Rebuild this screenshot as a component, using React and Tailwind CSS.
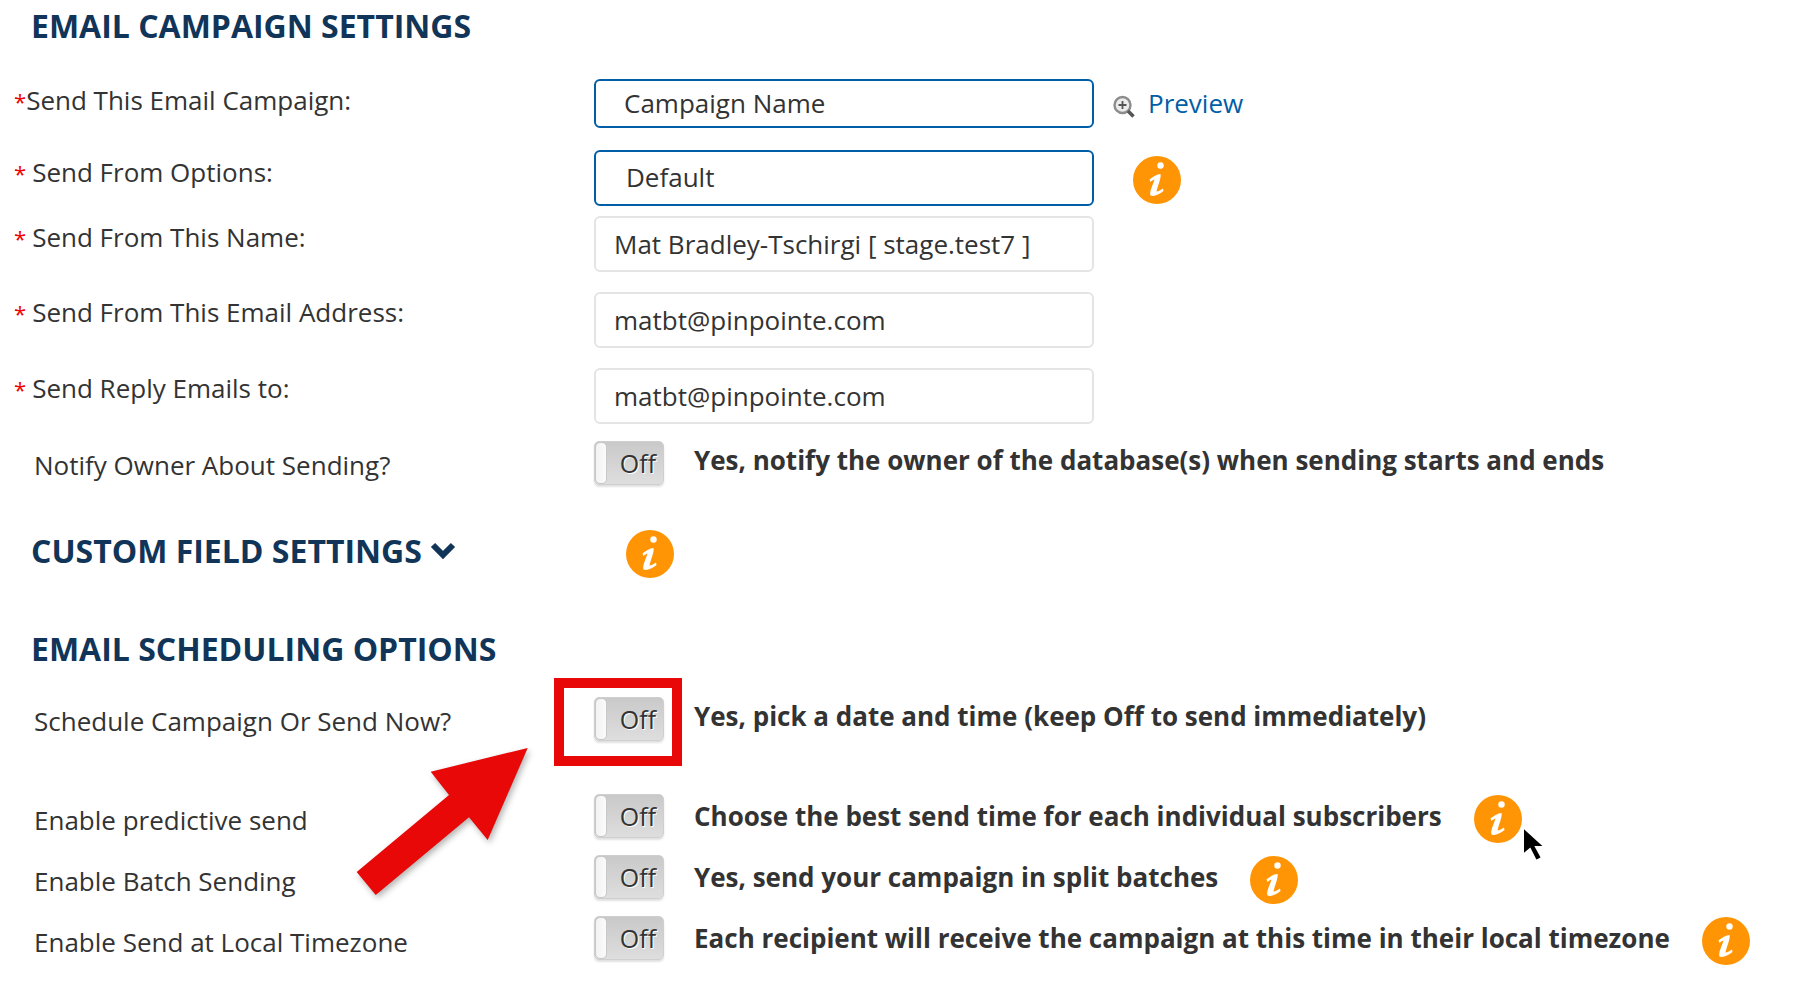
import React from 'react'

const InfoIcon = () => (
    <svg width="48" height="48" viewBox="0 0 48 48" className="shrink-0">
        <circle cx="24" cy="24" r="24" fill="#ff9505" />
        <circle cx="27.5" cy="9.5" r="3.2" fill="#fff" />
        <path d="M16.5 23.5 C20 20.5 24 18 27.5 18 C28.5 22 24.5 30 23.5 35.5 C25.5 35.5 28 34 30 32.5 L30.5 35 C26 38.5 21 41 17.5 39.5 C16 35.5 20.5 28 21.5 23.5 C20 24 18.5 25 17.5 26 Z" fill="#fff" />
    </svg>
)

const Toggle = () => (
    <div className="relative w-[70px] h-[44px] shrink-0 rounded-[5px] border border-[#cfcfcf] bg-linear-to-b from-[#c9c9c9] to-[#dedede] shadow-[0_2px_2px_rgba(0,0,0,0.12)]">
        <div className="absolute left-0 top-0 h-full w-[12px] rounded-[5px] border border-[#c8c8c8] bg-linear-to-r from-[#f2f2f2] to-[#fbfbfb]"></div>
        <div className="absolute right-[7px] top-[1px] h-full flex items-center text-[25px] text-[#333] [text-shadow:1px_1px_0_#fff]">Off</div>
    </div>
)

const Field = ({ value, active, height, pad }) => (
    <input
        readOnly
        value={value}
        style={{ height, paddingLeft: pad }}
        className={active
            ? 'w-[500px] rounded-[6px] border-2 border-[#005ea6] bg-white pb-[2px] text-[26px] text-[#333] outline-none'
            : 'w-[500px] rounded-[6px] border-2 border-[#e4e4e4] bg-white text-[26px] text-[#333] outline-none'}
    />
)

const Heading = ({ children }) => (
    <h2 className="pl-[31px] text-[32px] leading-[44px] font-bold text-[#113558]">{children}</h2>
)

const Req = ({ children }) => (
    <div className="pl-[14px] text-[26px] leading-[36px] text-[#333]">
        <span className="text-[22px] text-[#f00000]">*</span>
        <span className="ml-[6px]">{children}</span>
    </div>
)

const Plain = ({ children }) => (
    <div className="pl-[34px] text-[26px] leading-[36px] text-[#333]">{children}</div>
)

const Note = ({ children }) => (
    <div className="ml-[30px] text-[26px] leading-[36px] font-bold text-[#333] whitespace-nowrap">{children}</div>
)

export default function App() {
    return (
        <div className="relative w-[1814px] h-[998px] overflow-hidden bg-white font-['Open_Sans',sans-serif]">
            <div className="pt-[4px]">
                <Heading>EMAIL CAMPAIGN SETTINGS</Heading>
            </div>

            <div className="mt-[31px] flex h-[49px]">
                <div className="w-[594px] pt-[3px] pl-[14px] text-[26px] leading-[36px] text-[#333]">
                    <span className="text-[22px] text-[#f00000]">*</span>Send This Email Campaign:
                </div>
                <Field value="Campaign Name" active height={49} pad={28} />
                <div className="ml-[19px] flex items-center gap-[13px]">
                    <svg width="22" height="24" viewBox="0 0 22 24" fill="none" className="mt-[6px]">
                        <circle cx="9.5" cy="10" r="8" stroke="#8c8c8c" strokeWidth="2.4" fill="#ececec" />
                        <path d="M9.5 6v8M5.5 10h8" stroke="#555" strokeWidth="1.8" />
                        <path d="M15 16l5.5 5.5" stroke="#555" strokeWidth="3.5" />
                    </svg>
                    <span className="text-[26px] text-[#005ea6]">Preview</span>
                </div>
            </div>

            <div className="mt-[22px] flex h-[56px]">
                <div className="w-[594px] pt-[4px]"><Req>Send From Options:</Req></div>
                <Field value="Default" active height={56} pad={30} />
                <div className="ml-[39px] pt-[6px]"><InfoIcon /></div>
            </div>

            <div className="mt-[10px] flex h-[56px]">
                <div className="w-[594px] pt-[3px]"><Req>Send From This Name:</Req></div>
                <Field value="Mat Bradley-Tschirgi [ stage.test7 ]" height={56} pad={18} />
            </div>

            <div className="mt-[20px] flex h-[56px]">
                <div className="w-[594px] pt-[2px]"><Req>Send From This Email Address:</Req></div>
                <Field value="matbt@pinpointe.com" height={56} pad={18} />
            </div>

            <div className="mt-[20px] flex h-[56px]">
                <div className="w-[594px] pt-[2px]"><Req>Send Reply Emails to:</Req></div>
                <Field value="matbt@pinpointe.com" height={56} pad={18} />
            </div>

            <div className="mt-[17px] flex h-[44px]">
                <div className="w-[594px] pt-[6px]"><Plain>Notify Owner About Sending?</Plain></div>
                <Toggle />
                <div className="pt-[1px]"><Note>Yes, notify the owner of the database(s) when sending starts and ends</Note></div>
            </div>

            <div className="mt-[44px] flex h-[48px] items-center">
                <div className="w-[626px] flex items-center pb-[4px]">
                    <Heading>CUSTOM FIELD SETTINGS</Heading>
                    <svg width="26" height="18" viewBox="0 0 26 18" className="ml-[8px] mb-[3px]" fill="none">
                        <path d="M3 4l10 10L23 4" stroke="#113558" strokeWidth="6" />
                    </svg>
                </div>
                <div className="pt-[2px]"><InfoIcon /></div>
            </div>

            <div className="mt-[50px]">
                <Heading>EMAIL SCHEDULING OPTIONS</Heading>
            </div>

            <div className="mt-[26px] flex h-[44px]">
                <div className="w-[594px] pt-[6px]"><Plain>Schedule Campaign Or Send Now?</Plain></div>
                <Toggle />
                <div className="pt-[1px]"><Note>Yes, pick a date and time (keep Off to send immediately)</Note></div>
            </div>

            <div className="mt-[53px] flex h-[44px]">
                <div className="w-[594px] pt-[8px]"><Plain>Enable predictive send</Plain></div>
                <Toggle />
                <div className="pt-[4px]"><Note>Choose the best send time for each individual subscribers</Note></div>
                <div className="ml-[32px] pt-[1px] shrink-0"><InfoIcon /></div>
            </div>

            <div className="mt-[17px] flex h-[44px]">
                <div className="w-[594px] pt-[8px]"><Plain>Enable Batch Sending</Plain></div>
                <Toggle />
                <div className="pt-[4px]"><Note>Yes, send your campaign in split batches</Note></div>
                <div className="ml-[32px] pt-[1px] shrink-0"><InfoIcon /></div>
            </div>

            <div className="mt-[17px] flex h-[44px]">
                <div className="w-[594px] pt-[8px]"><Plain>Enable Send at Local Timezone</Plain></div>
                <Toggle />
                <div className="pt-[4px]"><Note>Each recipient will receive the campaign at this time in their local timezone</Note></div>
                <div className="ml-[32px] pt-[1px] shrink-0"><InfoIcon /></div>
            </div>

            {/* annotation drawn over the page */}
            <div className="absolute left-[554px] top-[678px] w-[128px] h-[88px] border-[10px] border-[#e90808]"></div>
            <svg className="absolute left-[340px] top-[730px] drop-shadow-[2px_3px_3px_rgba(0,0,0,0.3)]" width="200" height="180" viewBox="340 730 200 180">
                <path d="M527.7 748 L430.7 771.7 L449 795 L356.7 872 L375.7 895 L469 817.3 L487.7 840 Z" fill="#e90808" />
            </svg>
            <svg className="absolute left-[1519px] top-[824px]" width="34" height="42" viewBox="0 0 34 42">
                <path d="M4 3 L4 31 L11 25 L17 37 L23 34 L17 23 L26 23 Z" fill="#000" stroke="#fff" strokeWidth="2" />
            </svg>
        </div>
    )
}
